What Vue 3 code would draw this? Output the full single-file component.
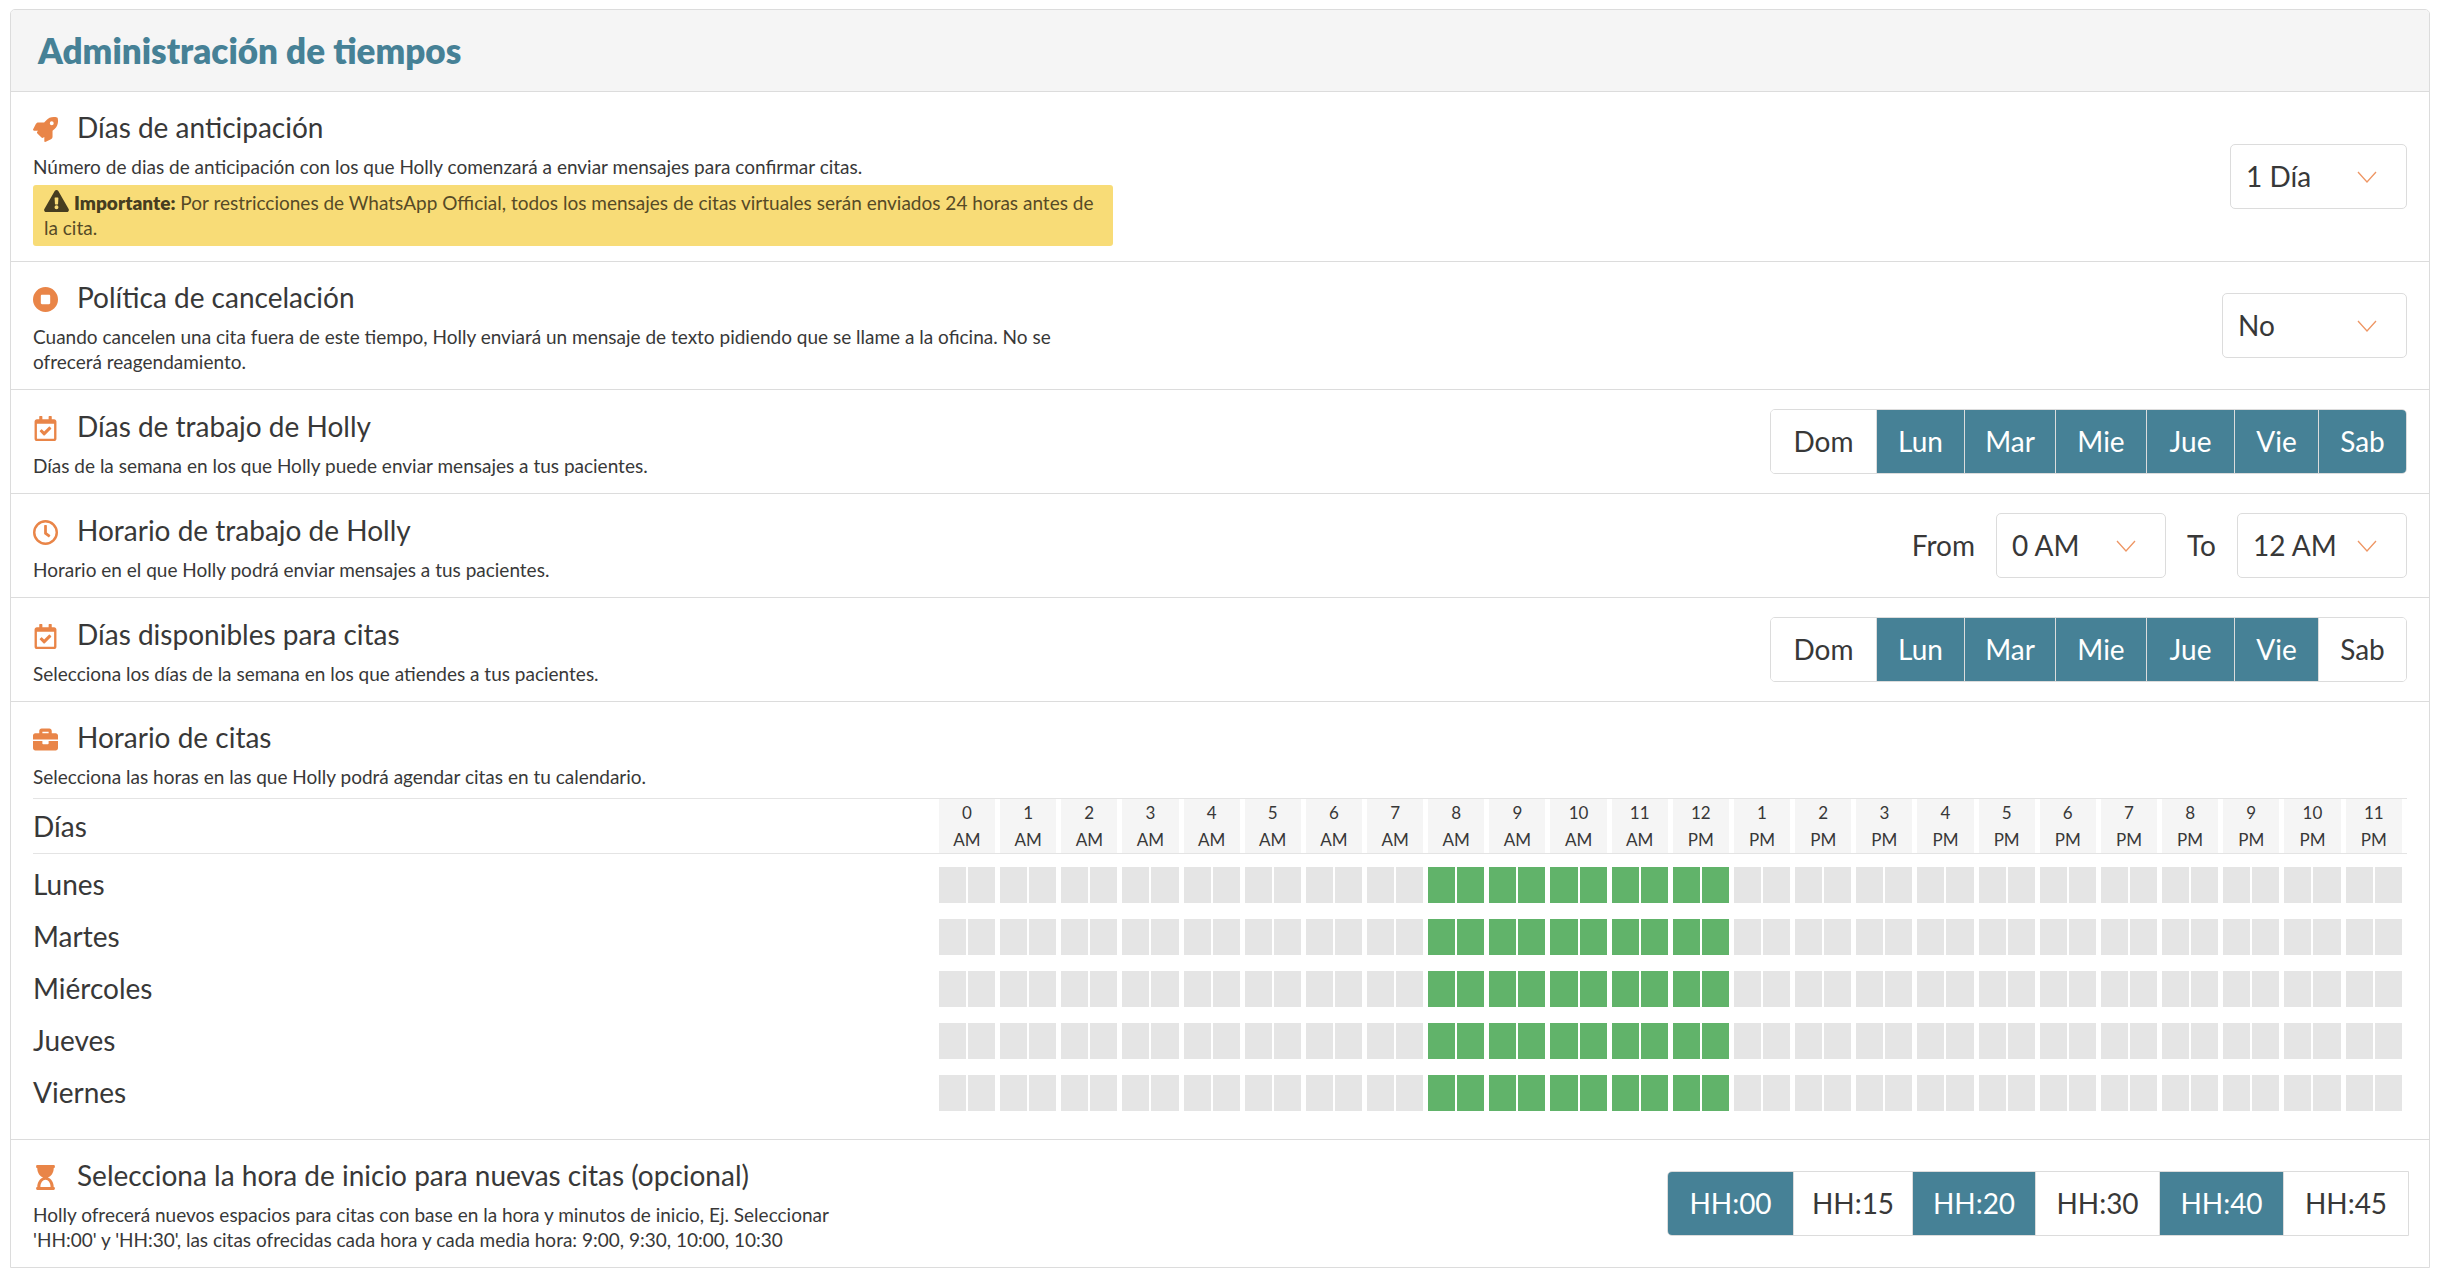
<script setup>
import { reactive, ref } from 'vue'

const leadDays = ref('1 Día')
const cancelPolicy = ref('No')
const fromHour = ref('0 AM')
const toHour = ref('12 AM')

const hourOptions = ['0 AM', '6 AM', '12 AM']

const makeDays = (active) =>
  ['Dom', 'Lun', 'Mar', 'Mie', 'Jue', 'Vie', 'Sab'].map((label) => ({ label, on: active.includes(label) }))

const workDays = reactive(makeDays(['Lun', 'Mar', 'Mie', 'Jue', 'Vie', 'Sab']))
const visitDays = reactive(makeDays(['Lun', 'Mar', 'Mie', 'Jue', 'Vie']))

const minutes = reactive([
  { label: 'HH:00', on: true },
  { label: 'HH:15', on: false },
  { label: 'HH:20', on: true },
  { label: 'HH:30', on: false },
  { label: 'HH:40', on: true },
  { label: 'HH:45', on: false },
])

const hours = Array.from({ length: 24 }, (_, h) => ({
  number: h > 12 ? h - 12 : h,
  period: h < 12 ? 'AM' : 'PM',
}))

const schedule = reactive(
  ['Lunes', 'Martes', 'Miércoles', 'Jueves', 'Viernes'].map((name) => ({
    name,
    slots: hours.map((_, h) => [h >= 8 && h <= 12, h >= 8 && h <= 12]),
  })),
)
</script>

<template>
  <main class="card">
    <header class="card-header">
      <h1>Administración de tiempos</h1>
    </header>

    <section class="row">
      <div class="info">
        <h2>
          <svg class="icon" viewBox="0 0 512 512" aria-hidden="true">
            <path d="M505 19c-2-6-6-9-12-11-94-21-168 0-225 62l-40 42H110c-24 0-42 12-52 32L3 250c-8 16 2 30 18 30h83l-14 18c-12 12-12 28 0 40l84 84c12 12 28 12 40 0l18-14v83c0 16 14 26 30 18l106-55c20-10 32-28 32-52V284l42-40c62-57 83-131 63-225zM384 168a40 40 0 1 1 0-80 40 40 0 0 1 0 80z" />
          </svg>
          Días de anticipación
        </h2>
        <p>Número de dias de anticipación con los que Holly comenzará a enviar mensajes para confirmar citas.</p>
        <div class="alert">
          <svg class="warn" viewBox="0 0 576 512" aria-hidden="true">
            <path d="M570 440c18 32-5 72-42 72H48c-37 0-60-40-42-72L246 24c19-32 65-32 84 0zM288 354a46 46 0 1 0 0 92 46 46 0 0 0 0-92zm-44-165 8 136c0 6 5 11 12 11h48c7 0 12-5 12-11l8-136c0-7-5-13-12-13h-64c-7 0-12 6-12 13z" />
          </svg>
          <strong>Importante:</strong> Por restricciones de WhatsApp Official, todos los mensajes de citas virtuales serán enviados 24 horas antes de la cita.
        </div>
      </div>
      <div class="controls">
        <span class="select medium">
          <select v-model="leadDays" aria-label="Días de anticipación">
            <option>1 Día</option>
            <option>2 Días</option>
          </select>
          <svg viewBox="0 0 20 12" aria-hidden="true"><path d="M1 1l9 10 9-10" /></svg>
        </span>
      </div>
    </section>

    <section class="row">
      <div class="info">
        <h2>
          <svg class="icon" viewBox="0 0 512 512" aria-hidden="true">
            <path d="M256 0a256 256 0 1 0 0 512 256 256 0 0 0 0-512zm96 328c0 13-11 24-24 24H184c-13 0-24-11-24-24V184c0-13 11-24 24-24h144c13 0 24 11 24 24z" />
          </svg>
          Política de cancelación
        </h2>
        <p>Cuando cancelen una cita fuera de este tiempo, Holly enviará un mensaje de texto pidiendo que se llame a la oficina. No se ofrecerá reagendamiento.</p>
      </div>
      <div class="controls">
        <span class="select large">
          <select v-model="cancelPolicy" aria-label="Política de cancelación">
            <option>No</option>
            <option>Sí</option>
          </select>
          <svg viewBox="0 0 20 12" aria-hidden="true"><path d="M1 1l9 10 9-10" /></svg>
        </span>
      </div>
    </section>

    <section class="row">
      <div class="info">
        <h2>
          <svg class="icon" viewBox="0 0 512 512" aria-hidden="true">
            <path fill-rule="evenodd" d="M432 64h-48V12c0-7-5-12-12-12h-40c-7 0-12 5-12 12v52H192V12c0-7-5-12-12-12h-40c-7 0-12 5-12 12v52H80c-27 0-48 21-48 48v352c0 27 21 48 48 48h352c27 0 48-21 48-48V112c0-27-21-48-48-48zm-6 400H86a6 6 0 0 1-6-6V160h352v298a6 6 0 0 1-6 6z" />
            <path d="M371 247l-28-28c-5-5-12-5-17 0L228 317l-43-43c-5-5-12-5-17 0l-28 28c-5 5-5 12 0 17l79 79c5 5 13 5 18 0l134-134c5-5 5-12 0-17z" />
          </svg>
          Días de trabajo de Holly
        </h2>
        <p>Días de la semana en los que Holly puede enviar mensajes a tus pacientes.</p>
      </div>
      <div class="controls">
        <div class="toggles days" role="group" aria-label="Días de trabajo de Holly">
          <button v-for="day in workDays" :key="day.label" type="button" :class="{ on: day.on }" :aria-pressed="day.on" @click="day.on = !day.on">{{ day.label }}</button>
        </div>
      </div>
    </section>

    <section class="row">
      <div class="info">
        <h2>
          <svg class="icon" viewBox="0 0 512 512" aria-hidden="true">
            <path fill-rule="evenodd" d="M256 0a256 256 0 1 0 0 512 256 256 0 0 0 0-512zm0 462a206 206 0 1 1 0-412 206 206 0 0 1 0 412z" />
            <path d="M318 355l-85-62c-3-2-5-6-5-10V116c0-7 5-12 12-12h32c7 0 12 5 12 12v142l67 49c5 4 6 11 2 17l-18 26c-4 6-12 7-17 5z" />
          </svg>
          Horario de trabajo de Holly
        </h2>
        <p>Horario en el que Holly podrá enviar mensajes a tus pacientes.</p>
      </div>
      <div class="controls">
        <label for="from-hour">From</label>
        <span class="select">
          <select id="from-hour" v-model="fromHour">
            <option v-for="hour in hourOptions" :key="hour">{{ hour }}</option>
          </select>
          <svg viewBox="0 0 20 12" aria-hidden="true"><path d="M1 1l9 10 9-10" /></svg>
        </span>
        <label for="to-hour">To</label>
        <span class="select">
          <select id="to-hour" v-model="toHour">
            <option v-for="hour in hourOptions" :key="hour">{{ hour }}</option>
          </select>
          <svg viewBox="0 0 20 12" aria-hidden="true"><path d="M1 1l9 10 9-10" /></svg>
        </span>
      </div>
    </section>

    <section class="row">
      <div class="info">
        <h2>
          <svg class="icon" viewBox="0 0 512 512" aria-hidden="true">
            <path fill-rule="evenodd" d="M432 64h-48V12c0-7-5-12-12-12h-40c-7 0-12 5-12 12v52H192V12c0-7-5-12-12-12h-40c-7 0-12 5-12 12v52H80c-27 0-48 21-48 48v352c0 27 21 48 48 48h352c27 0 48-21 48-48V112c0-27-21-48-48-48zm-6 400H86a6 6 0 0 1-6-6V160h352v298a6 6 0 0 1-6 6z" />
            <path d="M371 247l-28-28c-5-5-12-5-17 0L228 317l-43-43c-5-5-12-5-17 0l-28 28c-5 5-5 12 0 17l79 79c5 5 13 5 18 0l134-134c5-5 5-12 0-17z" />
          </svg>
          Días disponibles para citas
        </h2>
        <p>Selecciona los días de la semana en los que atiendes a tus pacientes.</p>
      </div>
      <div class="controls">
        <div class="toggles days" role="group" aria-label="Días disponibles para citas">
          <button v-for="day in visitDays" :key="day.label" type="button" :class="{ on: day.on }" :aria-pressed="day.on" @click="day.on = !day.on">{{ day.label }}</button>
        </div>
      </div>
    </section>

    <section class="row stacked">
      <div class="info">
        <h2>
          <svg class="icon" viewBox="0 0 512 512" aria-hidden="true">
            <path fill-rule="evenodd" d="M464 128h-80V80c0-27-21-48-48-48H176c-27 0-48 21-48 48v48H48c-27 0-48 21-48 48v80h512v-80c0-27-21-48-48-48zm-144 0H192V96h128z" />
            <path d="M320 336c0 9-7 16-16 16h-96c-9 0-16-7-16-16v-48H0v144c0 27 21 48 48 48h416c27 0 48-21 48-48V288H320z" />
          </svg>
          Horario de citas
        </h2>
        <p>Selecciona las horas en las que Holly podrá agendar citas en tu calendario.</p>
      </div>
      <table>
        <thead>
          <tr>
            <th class="day" scope="col">Días</th>
            <th v-for="(hour, h) in hours" :key="h" class="hour" scope="col">
              <span>{{ hour.number }}<br />{{ hour.period }}</span>
            </th>
          </tr>
        </thead>
        <tbody>
          <tr v-for="day in schedule" :key="day.name">
            <th class="day" scope="row">{{ day.name }}</th>
            <td v-for="(slot, h) in day.slots" :key="h">
              <div class="slots">
                <button
                  v-for="(open, half) in slot"
                  :key="half"
                  type="button"
                  :class="{ open }"
                  :aria-label="`${day.name} ${hours[h].number}:${half ? '30' : '00'} ${hours[h].period}`"
                  :aria-pressed="open"
                  @click="slot[half] = !open"
                ></button>
              </div>
            </td>
          </tr>
        </tbody>
      </table>
    </section>

    <section class="row">
      <div class="info narrow">
        <h2>
          <svg class="icon" viewBox="0 0 512 512" aria-hidden="true">
            <path fill-rule="evenodd" d="M424 64c13 0 24-11 24-24V24c0-13-11-24-24-24H88C75 0 64 11 64 24v16c0 13 11 24 24 24 0 91 51 167 121 192-70 25-121 101-121 192-13 0-24 11-24 24v16c0 13 11 24 24 24h336c13 0 24-11 24-24v-16c0-13-11-24-24-24 0-91-51-167-121-192 70-25 121-101 121-192zm-64 384H152c0-78 47-144 104-144s104 66 104 144z" />
          </svg>
          Selecciona la hora de inicio para nuevas citas (opcional)
        </h2>
        <p>Holly ofrecerá nuevos espacios para citas con base en la hora y minutos de inicio, Ej. Seleccionar 'HH:00' y 'HH:30', las citas ofrecidas cada hora y cada media hora: 9:00, 9:30, 10:00, 10:30</p>
      </div>
      <div class="controls">
        <div class="toggles minutes" role="group" aria-label="Hora de inicio para nuevas citas">
          <button v-for="minute in minutes" :key="minute.label" type="button" :class="{ on: minute.on }" :aria-pressed="minute.on" @click="minute.on = !minute.on">{{ minute.label }}</button>
        </div>
      </div>
    </section>
  </main>
</template>

<style>
body {
  background: #fff;
}
</style>

<style scoped>
.card {
  box-sizing: border-box;
  margin: 9px 8px 9px 10px;
  border: 1px solid #dcdcdc;
  border-radius: 5px 5px 0 0;
  color: #383838;
  font-family: Lato, "Noto Sans", sans-serif;
  font-size: 28px;
}

.card-header {
  padding: 16px 27px 17px;
  border-bottom: 1px solid #dcdcdc;
  border-radius: 4px 4px 0 0;
  background: #f5f5f5;
}

h1 {
  margin: 0;
  color: #468196;
  font-size: 35px;
  font-weight: 800;
  line-height: 48px;
}

.row {
  display: flex;
  align-items: center;
  justify-content: space-between;
  padding: 0 22px;
}

.row + .row {
  border-top: 1px solid #dcdcdc;
}

.stacked {
  flex-direction: column;
  align-items: stretch;
  padding-bottom: 20px;
}

.info {
  flex: 0 1 1080px;
  padding: 14px 0 15px;
}

.narrow {
  flex-basis: 830px;
}

.stacked .info {
  flex-basis: auto;
  padding-bottom: 9px;
}

h2 {
  display: flex;
  align-items: center;
  gap: 19px;
  margin: 0 0 6px;
  font-size: 28px;
  font-weight: 400;
  line-height: 42px;
}

.icon {
  flex: none;
  width: 25px;
  height: 25px;
  margin-top: 5px;
  fill: #e98548;
}

p {
  margin: 0;
  font-size: 19px;
  line-height: 25px;
}

.alert {
  margin-top: 6px;
  padding: 5px 10px 6px 11px;
  border-radius: 3px;
  background: #f8dc77;
  color: #564a26;
  font-size: 19px;
  line-height: 25px;
}

.alert strong {
  color: #463d20;
  font-weight: 800;
}

.warn {
  width: 25px;
  height: 22px;
  margin-right: 5px;
  vertical-align: -2px;
  fill: #463d20;
}

.controls {
  display: flex;
  align-items: center;
  gap: 21px;
  padding: 19px 0;
}

.select {
  position: relative;
  width: 170px;
}

.select.medium {
  width: 177px;
}

.select.large {
  width: 185px;
}

label {
  padding-bottom: 2px;
}

select {
  display: block;
  box-sizing: border-box;
  width: 100%;
  height: 65px;
  padding: 0 15px 2px;
  appearance: none;
  border: 1px solid #dcdcdc;
  border-radius: 5px;
  background: #fff;
  color: inherit;
  font: inherit;
}

.select svg {
  position: absolute;
  top: 27px;
  right: 30px;
  width: 20px;
  height: 12px;
  fill: none;
  stroke: #ee9664;
  stroke-width: 1.3;
  pointer-events: none;
}

.toggles {
  display: grid;
  box-sizing: border-box;
  height: 65px;
  overflow: hidden;
  border: 1px solid #dcdcdc;
  border-radius: 5px;
}

.days {
  grid-template-columns: 105fr 88fr 91fr 91fr 88fr 84fr 88fr;
  width: 637px;
}

.minutes {
  grid-template-columns: 125fr 119fr 123fr 124fr 124fr 125fr;
  width: 742px;
  margin-right: -2px;
  border-radius: 5px 0 0 5px;
}

.toggles button {
  padding: 0 0 2px;
  border: 0;
  border-left: 1px solid #dcdcdc;
  background: #fff;
  color: inherit;
  font: inherit;
}

.toggles button:first-child {
  border-left: 0;
}

.toggles button.on {
  background: #468196;
  color: #fff;
}

table {
  width: 100%;
  border-spacing: 0;
  table-layout: fixed;
}

th {
  padding: 0;
  font-weight: 400;
}

thead th {
  border: 1px solid #e4e4e4;
  border-width: 1px 0;
}

.day {
  width: 38.16%;
  text-align: left;
}

tbody .day {
  padding-bottom: 2px;
}

.hour {
  font-size: 17px;
  line-height: 27px;
}

.hour span {
  display: block;
  margin-right: 5px;
  background: #f5f5f5;
}

td {
  height: 52px;
  padding: 0;
}

tbody::before {
  display: block;
  height: 5px;
  content: "";
}

.slots {
  display: flex;
  gap: 2px;
  margin-right: 5px;
}

.slots button {
  flex: 1;
  height: 36px;
  padding: 0;
  border: 0;
  background: #e5e5e5;
}

.slots button.open {
  background: #61b36a;
}
</style>
